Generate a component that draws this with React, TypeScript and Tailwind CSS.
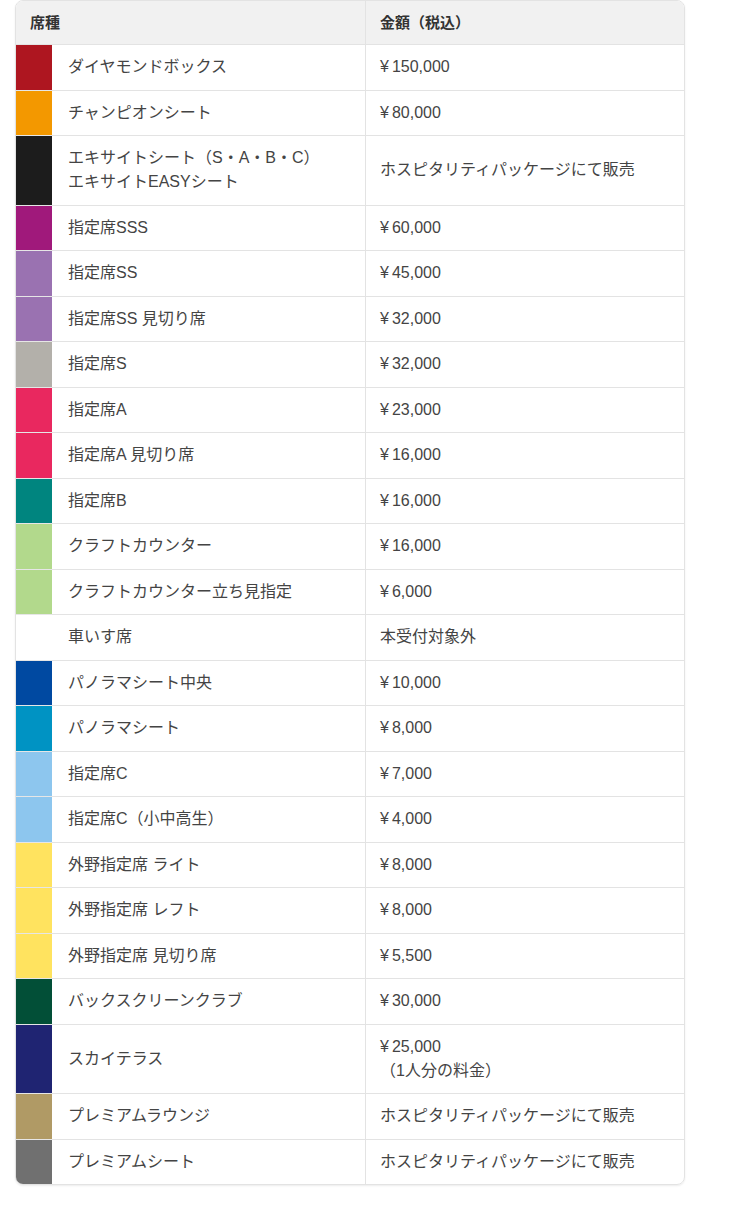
import React from 'react';

type Seat = {
  color: string;
  name: React.ReactNode;
  price: React.ReactNode;
};

const Yen = ({ v }: { v: string }) => (
  <>
    <span className="mr-[3px]">¥</span>
    {v}
  </>
);

const seats: Seat[] = [
  { color: 'bg-[#ae1620]', name: 'ダイヤモンドボックス', price: <Yen v="150,000" /> },
  { color: 'bg-[#f39800]', name: 'チャンピオンシート', price: <Yen v="80,000" /> },
  {
    color: 'bg-[#1c1c1c]',
    name: (
      <>
        エキサイトシート（S・A・B・C）
        <br />
        エキサイトEASYシート
      </>
    ),
    price: 'ホスピタリティパッケージにて販売',
  },
  { color: 'bg-[#a0197b]', name: '指定席SSS', price: <Yen v="60,000" /> },
  { color: 'bg-[#9a72b1]', name: '指定席SS', price: <Yen v="45,000" /> },
  { color: 'bg-[#9a72b1]', name: '指定席SS 見切り席', price: <Yen v="32,000" /> },
  { color: 'bg-[#b3b0aa]', name: '指定席S', price: <Yen v="32,000" /> },
  { color: 'bg-[#e9285f]', name: '指定席A', price: <Yen v="23,000" /> },
  { color: 'bg-[#e9285f]', name: '指定席A 見切り席', price: <Yen v="16,000" /> },
  { color: 'bg-[#00857f]', name: '指定席B', price: <Yen v="16,000" /> },
  { color: 'bg-[#b2d98c]', name: 'クラフトカウンター', price: <Yen v="16,000" /> },
  { color: 'bg-[#b2d98c]', name: 'クラフトカウンター立ち見指定', price: <Yen v="6,000" /> },
  { color: 'bg-white', name: '車いす席', price: '本受付対象外' },
  { color: 'bg-[#0049a1]', name: 'パノラマシート中央', price: <Yen v="10,000" /> },
  { color: 'bg-[#0093c3]', name: 'パノラマシート', price: <Yen v="8,000" /> },
  { color: 'bg-[#8dc6ee]', name: '指定席C', price: <Yen v="7,000" /> },
  { color: 'bg-[#8dc6ee]', name: '指定席C（小中高生）', price: <Yen v="4,000" /> },
  { color: 'bg-[#ffe35f]', name: '外野指定席 ライト', price: <Yen v="8,000" /> },
  { color: 'bg-[#ffe35f]', name: '外野指定席 レフト', price: <Yen v="8,000" /> },
  { color: 'bg-[#ffe35f]', name: '外野指定席 見切り席', price: <Yen v="5,500" /> },
  { color: 'bg-[#024f37]', name: 'バックスクリーンクラブ', price: <Yen v="30,000" /> },
  {
    color: 'bg-[#1f2472]',
    name: 'スカイテラス',
    price: (
      <>
        <Yen v="25,000" />
        <br />
        （1人分の料金）
      </>
    ),
  },
  { color: 'bg-[#b09a65]', name: 'プレミアムラウンジ', price: 'ホスピタリティパッケージにて販売' },
  { color: 'bg-[#707070]', name: 'プレミアムシート', price: 'ホスピタリティパッケージにて販売' },
];

export default function App() {
  return (
    <div className="min-h-[1213px] bg-white pl-[15px] font-['Liberation_Sans','Noto_Sans_CJK_JP',sans-serif] text-[16px] leading-[24px] text-[#444]">
      <div className="w-[670px] overflow-hidden rounded-lg border border-[#e3e3e3] shadow-[0_1px_2px_rgba(0,0,0,0.08)]">
        <table className="w-full border-separate border-spacing-0">
          <thead>
            <tr className="bg-[#f1f1f1] text-[15px] font-bold text-[#333]">
              <th colSpan={2} className="h-[44px] border-b border-r border-[#e3e3e3] pl-[14px] text-left align-middle">
                席種
              </th>
              <th className="border-b border-[#e3e3e3] pl-[14px] text-left align-middle">金額（税込）</th>
            </tr>
          </thead>
          <tbody>
            {seats.map((s, i) => {
              const last = i === seats.length - 1;
              return (
                <tr key={i}>
                  <td
                    className={`w-[36px] p-0 ${s.color} ${last ? '' : 'border-b border-[#e6e6e6]'}`}
                  />
                  <td
                    className={`w-[314px] border-r border-[#e3e3e3] py-[10.25px] pl-[16px] pr-2 align-middle ${last ? '' : 'border-b'}`}
                  >
                    {s.name}
                  </td>
                  <td className={`border-[#e3e3e3] py-[10.25px] pl-[14px] pr-2 align-middle ${last ? '' : 'border-b'}`}>
                    {s.price}
                  </td>
                </tr>
              );
            })}
          </tbody>
        </table>
      </div>
    </div>
  );
}
